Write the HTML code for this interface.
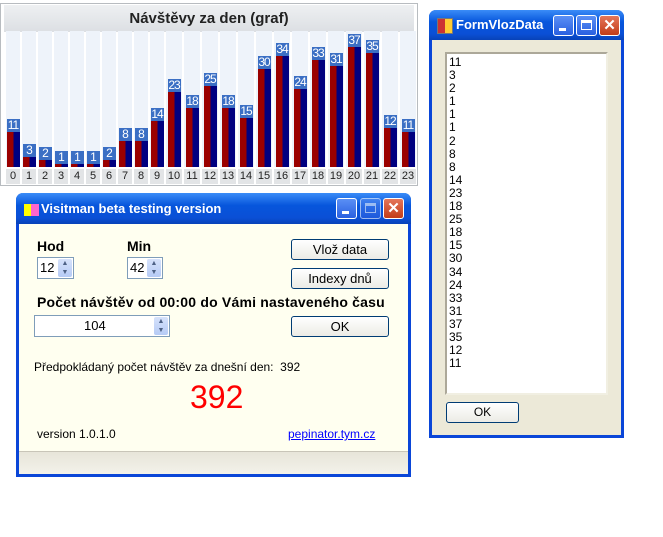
<!DOCTYPE html>
<html><head><meta charset="utf-8"><style>
body{margin:0;width:663px;height:537px;background:#fff;position:relative;font-family:"Liberation Sans",sans-serif;overflow:hidden}
.abs{position:absolute}
#chart{left:0;top:3px;width:418px;height:183px;border:1px solid #b8bcc0;box-sizing:border-box;background:#fff}
#ct{left:3px;top:1px;width:410px;height:27px;background:linear-gradient(#eef0f2,#dcdfe3);font-weight:bold;font-size:15px;text-align:center;line-height:27px;color:#222}
#cols{left:4px;top:27px;width:412px;height:136px;display:grid;grid-template-columns:repeat(10,16fr) repeat(14,18fr)}
.c{display:flex;flex-direction:column;justify-content:flex-end;align-items:center;background:#eef3fa;margin:0 1px}
.l{width:13px;height:13px;background:#3b6fc4;color:#fff;font-size:12px;line-height:13px;text-align:center;letter-spacing:-1px}
.b{width:13px;background:linear-gradient(90deg,#9a0000 50%,#000080 50%)}
#labs{left:4px;top:165px;width:412px;height:15px;display:grid;grid-template-columns:repeat(10,16fr) repeat(14,18fr)}
#labs div{background:#e2e4e6;margin:0 1px;font-size:11px;text-align:center;line-height:15px;color:#222}
.win{border:3px solid #0a46d8;border-top:none;border-radius:7px 7px 0 0;box-sizing:border-box}
.tb{position:absolute;left:-3px;right:-3px;top:0;height:30px;background:linear-gradient(#3a8cf7,#0756dc 40%,#0a4fd6 80%,#0842b8);border-radius:7px 7px 0 0;color:#fff;font-weight:bold;font-size:13px;line-height:30px}
.btn3{position:absolute;top:5px;width:21px;height:21px;border:1px solid #fff;border-radius:3px;box-sizing:border-box;background:linear-gradient(#5a8ff5,#2a60e0)}
.btn3.x{background:linear-gradient(#e5765a,#c23c18)}
.pb{position:absolute;border:1px solid #003c74;border-radius:3px;background:linear-gradient(#fff,#ecebe5);font-size:13px;text-align:center;box-sizing:border-box}
.spin{position:absolute;border:1px solid #7f9db9;background:#fff;box-sizing:border-box;font-size:13px}
.sp{position:absolute;right:1px;top:1px;width:14px;bottom:1px;background:linear-gradient(#d6e2fb,#b6cbf5);border-radius:2px;font-size:7px;line-height:9px;text-align:center;color:#4d6185}
</style></head><body>
<div id="chart" class="abs">
<div id="ct" class="abs">Návštěvy za den (graf)</div>
<div id="cols" class="abs">
<div class="c"><div class="l">11</div><div class="b" style="height:35px"></div></div>
<div class="c"><div class="l">3</div><div class="b" style="height:10px"></div></div>
<div class="c"><div class="l">2</div><div class="b" style="height:7px"></div></div>
<div class="c"><div class="l">1</div><div class="b" style="height:3px"></div></div>
<div class="c"><div class="l">1</div><div class="b" style="height:3px"></div></div>
<div class="c"><div class="l">1</div><div class="b" style="height:3px"></div></div>
<div class="c"><div class="l">2</div><div class="b" style="height:7px"></div></div>
<div class="c"><div class="l">8</div><div class="b" style="height:26px"></div></div>
<div class="c"><div class="l">8</div><div class="b" style="height:26px"></div></div>
<div class="c"><div class="l">14</div><div class="b" style="height:46px"></div></div>
<div class="c"><div class="l">23</div><div class="b" style="height:75px"></div></div>
<div class="c"><div class="l">18</div><div class="b" style="height:59px"></div></div>
<div class="c"><div class="l">25</div><div class="b" style="height:81px"></div></div>
<div class="c"><div class="l">18</div><div class="b" style="height:59px"></div></div>
<div class="c"><div class="l">15</div><div class="b" style="height:49px"></div></div>
<div class="c"><div class="l">30</div><div class="b" style="height:98px"></div></div>
<div class="c"><div class="l">34</div><div class="b" style="height:111px"></div></div>
<div class="c"><div class="l">24</div><div class="b" style="height:78px"></div></div>
<div class="c"><div class="l">33</div><div class="b" style="height:107px"></div></div>
<div class="c"><div class="l">31</div><div class="b" style="height:101px"></div></div>
<div class="c"><div class="l">37</div><div class="b" style="height:120px"></div></div>
<div class="c"><div class="l">35</div><div class="b" style="height:114px"></div></div>
<div class="c"><div class="l">12</div><div class="b" style="height:39px"></div></div>
<div class="c"><div class="l">11</div><div class="b" style="height:35px"></div></div>
</div>
<div id="labs" class="abs"><div>0</div><div>1</div><div>2</div><div>3</div><div>4</div><div>5</div><div>6</div><div>7</div><div>8</div><div>9</div><div>10</div><div>11</div><div>12</div><div>13</div><div>14</div><div>15</div><div>16</div><div>17</div><div>18</div><div>19</div><div>20</div><div>21</div><div>22</div><div>23</div></div>
</div>

<!-- FormVlozData -->
<div class="abs win" style="left:429px;top:10px;width:195px;height:428px;background:#ece9d8">
<div class="tb"><span style="position:absolute;left:8px;top:8px;width:14px;height:14px;background:linear-gradient(90deg,#c33 50%,#fc3 50%);border:1px solid #777"></span><span style="position:absolute;left:27px">FormVlozData</span>
<div class="btn3" style="left:124px"><div style="position:absolute;left:5px;top:12px;width:7px;height:3px;background:#fff"></div></div>
<div class="btn3" style="left:147px"><div style="position:absolute;left:4px;top:4px;width:11px;height:10px;border:1px solid #fff;border-top-width:3px;box-sizing:border-box"></div></div>
<div class="btn3 x" style="left:170px;color:#fff;text-align:center;line-height:19px;font-size:15px">✕</div>
</div>
<div class="abs" style="left:13px;top:42px;width:163px;height:343px;background:#fff;border:2px solid #aca899;border-right-color:#f1efe2;border-bottom-color:#f1efe2;box-sizing:border-box;font-size:12px;line-height:13.1px;padding:2px 0 0 2px;color:#000">11<br>3<br>2<br>1<br>1<br>1<br>2<br>8<br>8<br>14<br>23<br>18<br>25<br>18<br>15<br>30<br>34<br>24<br>33<br>31<br>37<br>35<br>12<br>11</div>
<div class="pb" style="left:14px;top:392px;width:73px;height:21px;line-height:19px;font-size:12px">OK</div>
</div>

<!-- Visitman -->
<div class="abs win" style="left:16px;top:193px;width:395px;height:284px;background:#fffff0">
<div class="tb" style="height:31px;line-height:32px"><span style="position:absolute;left:8px;top:11px;width:7px;height:12px;background:#ff0"></span><span style="position:absolute;left:15px;top:11px;width:8px;height:12px;background:#f6c"></span><span style="position:absolute;left:25px">Visitman beta testing version</span>
<div class="btn3" style="left:320px"><div style="position:absolute;left:5px;top:12px;width:7px;height:3px;background:#fff"></div></div>
<div class="btn3" style="left:344px;opacity:.6"><div style="position:absolute;left:4px;top:4px;width:11px;height:10px;border:1px solid #fff;border-top-width:3px;box-sizing:border-box"></div></div>
<div class="btn3 x" style="left:367px;color:#fff;text-align:center;line-height:19px;font-size:15px">✕</div>
</div>
<div class="abs" style="left:18px;top:45px;font-weight:bold;font-size:14px">Hod</div>
<div class="abs" style="left:108px;top:45px;font-weight:bold;font-size:14px">Min</div>
<div class="spin" style="left:18px;top:64px;width:37px;height:22px;line-height:20px;padding-left:2px">12<div class="sp">▲<br>▼</div></div>
<div class="spin" style="left:108px;top:64px;width:36px;height:22px;line-height:20px;padding-left:2px">42<div class="sp">▲<br>▼</div></div>
<div class="pb" style="left:272px;top:46px;width:98px;height:21px;line-height:19px">Vlož data</div>
<div class="pb" style="left:272px;top:75px;width:98px;height:21px;line-height:19px">Indexy dnů</div>
<div class="abs" style="left:18px;top:101px;font-weight:bold;font-size:14px;letter-spacing:0.2px">Počet návštěv od 00:00 do Vámi nastaveného času</div>
<div class="spin" style="left:15px;top:122px;width:136px;height:22px;line-height:20px;padding-left:49px">104<div class="sp">▲<br>▼</div></div>
<div class="pb" style="left:272px;top:123px;width:98px;height:21px;line-height:19px">OK</div>
<div class="abs" style="left:15px;top:167px;font-size:12px">Předpokládaný počet návštěv za dnešní den:&nbsp; 392</div>
<div class="abs" style="left:171px;top:186px;font-size:32px;color:#f00">392</div>
<div class="abs" style="left:18px;top:234px;font-size:12px">version 1.0.1.0</div>
<div class="abs" style="left:269px;top:234px;font-size:12px;color:#00f;text-decoration:underline">pepinator.tym.cz</div>
<div class="abs" style="left:0;right:0;top:258px;bottom:0;background:linear-gradient(#e7e5d9,#f3f2ea);border-top:1px solid #c8c5b8"></div>
</div>
</body></html>
